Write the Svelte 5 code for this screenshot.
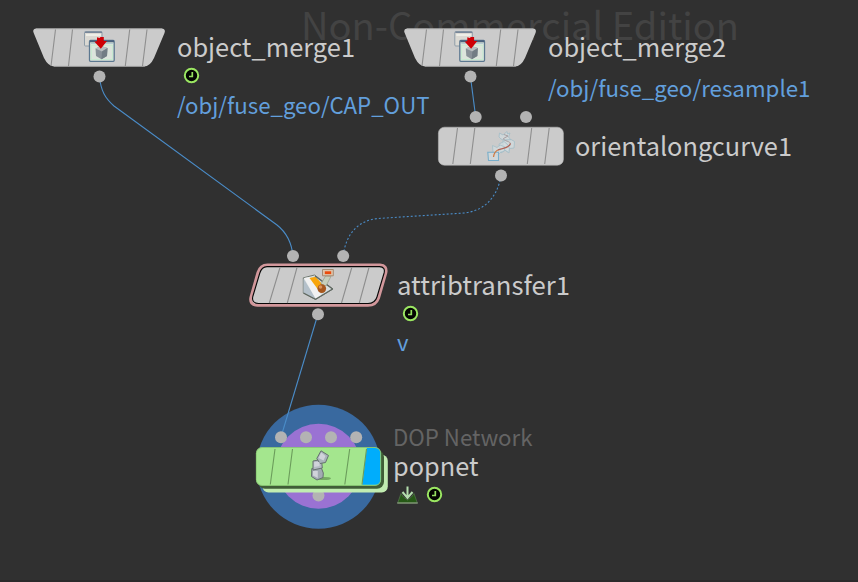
<script>
  const labels = [
    { t: 'object_merge1', x: 177, y: 56.8, w: 178, s: 25.6, c: 'name' },
    { t: 'object_merge2', x: 548, y: 56.8, w: 178, s: 25.6, c: 'name' },
    { t: 'orientalongcurve1', x: 575, y: 155.8, w: 217, s: 25.6, c: 'name' },
    { t: 'attribtransfer1', x: 397, y: 294.9, w: 173, s: 25.6, c: 'name' },
    { t: 'popnet', x: 393, y: 475.7, w: 85.5, s: 25.6, c: 'name' },
    { t: '/obj/fuse_geo/CAP_OUT', x: 177, y: 113.8, w: 252.5, s: 22.5, c: 'path' },
    { t: '/obj/fuse_geo/resample1', x: 548, y: 97, w: 262.5, s: 22.5, c: 'path' },
    { t: 'v', x: 397, y: 351, w: 11.5, s: 22.5, c: 'path' },
    { t: 'DOP Network', x: 393, y: 446, w: 139.5, s: 22.5, c: 'kind' }
  ];
  const dots = [[99.5,76.5],[470.5,76.5],[475.7,117],[526,117],[501,175.5],[293,256],[343.2,256],[318,314.3],[281,437.3],[306,437.3],[331,437.3],[356.2,437.3],[318.5,495.6]];
  const clocks = [[191.5,75.5],[410.5,313.5],[434.5,494.5]];
  const merges = [{ x: 0, icon: 0 }, { x: 371, icon: -0.7 }];
</script>

<svg class="network" width="858" height="582" viewBox="0 0 858 582">
  <rect width="858" height="582" fill="#303030" />
  <rect y="580" width="858" height="2" fill="#2b2a2b" />
  <text class="watermark" x="301" y="39.5" font-size="37.5" textLength="438" lengthAdjust="spacingAndGlyphs">Non-Commercial Edition</text>

  <circle cx="318.5" cy="466.7" r="62" fill="#39699f" />
  <circle cx="318.5" cy="466.3" r="42.5" fill="#9a72d3" />

  <g class="wire">
    <path d="M99.5 77C101 91 105 98 114 106L277 225Q291 236 293 256" />
    <path d="M470.5 77L475.7 117" />
    <path d="M501 176C497 198 484 211 464 213L378 218.5C360 220 346 232 343.2 256" stroke-dasharray="2 2" />
    <path d="M318 314L281 437" />
  </g>

  {#each dots as [x, y]}
    <circle cx={x} cy={y} r="6" fill="#b3b3b3" />
  {/each}

  {#each merges as m}
    <g transform="translate({m.x} 0)">
      <path d="M36 28.5H162Q166 29 164.5 33L154 58Q150 66.5 144 66.5H54Q48 66 44 58L33.7 33Q32 29 36 28.5Z" fill="#cbcbcb" />
      <path d="M36 28.8H162M54 66.3H145" stroke="#aaa" stroke-width=".7" />
      <path class="rib" d="M55.5 29.5L51 66M72.5 29.5L68.5 66M129.7 29.5L125.3 66M147 29.5L142.5 66" />
      <g transform="translate({m.icon} 0)">
        <rect x="84.5" y="31.5" width="17.5" height="14.5" rx="1" fill="#dbd9d3" stroke="#8f9da8" />
        <path d="M85 32.3H102" stroke="#6d7d92" stroke-width="1.2" />
        <path d="M86 35H101" stroke="#f4f4ee" stroke-width="1.5" />
        <rect x="89.5" y="40.5" width="24.7" height="20.8" rx="1" fill="#dce4dc" stroke="#5c7890" stroke-width="1.3" />
        <path d="M90 41.3H114" stroke="#4a617d" stroke-width="2" />
        <path d="M91 43.5H113" stroke="#b5cdd2" stroke-width="1" />
        <rect x="91.3" y="45.3" width="21.2" height="14.2" fill="none" stroke="#c7ead0" />
        <path d="M95.5 48.5L101 46L107.5 48L107 56L101.5 59.3L96 56Z" fill="#899198" />
        <path d="M95.5 48.5L101 46L107.5 48L102 51.5Z" fill="#b8bec0" />
        <path d="M102 51.5L107.5 48L107 56L101.5 59.3Z" fill="#727d84" />
        <path d="M97 37.3L99.5 38L100.5 37H103.8V41H107L100.8 48.8L94.5 41.8L97 41Z" fill="#ce0006" />
      </g>
    </g>
  {/each}

  <rect x="438.4" y="127.2" width="125" height="38" rx="6" fill="#cbcbcb" stroke="#b5b5b5" stroke-width=".6" />
  <path class="rib" d="M457.5 128L452.8 164M474.8 128L470.3 164M531.7 128L527.3 164M549.2 128L544.7 164" />
  <g fill="#d3dde0" fill-opacity=".65" stroke="#a2bdc7" stroke-width=".8">
    <path d="M499.5 133L503 135L507 131.5L507.5 134L510 133L508.5 137L511 140L506 141L501 139L499 137Z" />
    <path d="M503 140L511 139.5L514.5 141.5L514 148L509.5 148.5L508 152L503 149Z" />
    <path d="M499 144L504 141.5L508 145L509.5 149L509 153L505 150L501 153Z" />
    <path d="M492.5 145.5L497 147.5L500 145L505 147L504 151.5L501 152L498 155L493 152Z" />
    <path d="M487.8 152.2H498.5V160.5H488.5Z" stroke="#78aeca" stroke-width="1.1" />
  </g>
  <path d="M510.5 144C511 141 503 141 503.5 138.5L508 136L504 134.5" fill="none" stroke="#a3979a" stroke-width=".9" />
  <path d="M493.5 157C494 152 496 150.5 499 149.5" fill="none" stroke="#cf783f" stroke-width="1.3" />
  <path d="M498 150C502 148 509 148.5 510.5 143.5" fill="none" stroke="#b06659" stroke-width="1.3" />

  <path d="M267.5 265H380Q387.3 265.5 385.8 273L378.5 298Q376 305.3 368 305.3H257.5Q249.2 305 251 297L258 272.5Q260.3 265 267.5 265Z" fill="#cbcbcb" stroke="#d2979b" stroke-width="3" />
  <path d="M267 266.6H379.5Q385.6 267 384.1 273L377 297Q375 303.5 368 303.5H258.5Q251.3 303 252.8 296.5L259.8 273Q261.8 266.6 267 266.6Z" fill="#cbcbcb" stroke="#080606" stroke-width="1.1" />
  <path class="rib" d="M280 267.5L269.3 303M297 267.5L287.3 303M351.8 267.5L341.5 303M369 267.5L359.3 303" />
  <g stroke-linejoin="round">
    <path d="M303.3 277.8L314.5 275L333 289L315.5 299.5L303.3 293Z" fill="#d7dedf" stroke="#727a72" />
    <path d="M303.5 278.5L316 298.8L303.5 292.8Z" fill="#b4c0ca" />
    <path d="M304 278L310 277L321.5 295.5L315.8 299Z" fill="#f1f1f2" />
    <path d="M309.5 278L315.5 276.8L324 286L319.5 291.5Z" fill="#f8a50b" />
    <path d="M315 276L332.5 289L315.5 299.3L303.5 293" fill="none" stroke="#616962" stroke-width="1.2" />
    <path d="M325.5 276L331 276.3L326 286L321 284Z" fill="#c7cfbc" stroke="#8b9480" stroke-width=".6" />
    <rect x="322.5" y="269.5" width="10.8" height="6.3" fill="#dec6ad" stroke="#a48b72" />
    <rect x="324.8" y="271.3" width="6.4" height="2.8" fill="#eb4b0c" />
    <circle cx="321.8" cy="288.6" r="4.3" fill="#a7571e" />
    <circle cx="320.5" cy="287" r="1.8" fill="#d9935d" />
  </g>

  <rect x="262.5" y="454.8" width="125.3" height="37.8" rx="6" fill="#c1ecb1" />
  <rect x="258" y="450" width="126" height="38.8" rx="7" fill="#405e37" />
  <rect x="256" y="447.2" width="125" height="38.5" rx="6" fill="#a4e68e" />
  <path d="M366.8 448H376Q380.4 448.5 380.4 453V480Q380.4 484.5 376 484.8H362.3Z" fill="#00adfc" />
  <rect x="256.3" y="447.5" width="124.4" height="38" rx="6" fill="none" stroke="#82c36d" stroke-width=".7" />
  <path class="rib green" d="M275 449L270.3 484.5M292.5 449L288 484.5M349.7 449L344.8 484.5M366.5 449L362 484.5" />
  <ellipse cx="324" cy="478.5" rx="7" ry="1.6" fill="#639251" opacity=".7" />
  <g stroke="#66716f" stroke-width="1" stroke-linejoin="round">
    <path d="M311.8 468.5L321 467L323.3 473L323 477.5L317 480L311.5 476.5Z" fill="#a2aab3" />
    <path d="M313 461L321.5 459.5L322.3 468L313 470Z" fill="#b4bac3" />
    <path d="M321 450.8L328.5 455.5L325.5 462.5L320 463.5L316.8 458.5Z" fill="#a9b3ba" />
  </g>
  <path d="M321.2 452.5L325.5 456L323.5 460.5L318.5 458ZM314.2 462H319.5V466L314.2 467ZM313 471H317.8V478L313 475.5Z" fill="#d0d3da" />

  {#each clocks as [x, y]}
    <g transform="translate({x} {y})">
      <circle r="6.7" fill="#030602" stroke="#9be762" stroke-width="2" />
      <path d="M.8 -3.6V1H-2.5" fill="none" stroke="#94df60" stroke-width="1.7" />
    </g>
  {/each}

  <g>
    <path d="M401 493.5L403.5 497L407.5 500L411.5 497L414 493.5L417.3 503H397.7Z" fill="#265916" stroke="#52704a" stroke-width=".8" />
    <path d="M397.2 503H417.8" stroke="#8ba081" stroke-width="1.2" />
    <path d="M407.5 486.5V497M402.5 492L407.5 498L412.5 492" fill="none" stroke="#b4ddad" stroke-width="2" />
  </g>

  {#each labels as l}
    <text class={l.c} x={l.x} y={l.y} font-size={l.s} textLength={l.w} lengthAdjust="spacingAndGlyphs">{l.t}</text>
  {/each}
</svg>

<style>
  .network { display: block; font-family: "Noto Sans CJK SC", "Noto Sans", sans-serif; }
  .watermark { fill: #434343; }
  .name { fill: #cbcbcb; }
  .path { fill: #629fdc; }
  .kind { fill: #646464; }
  .wire { fill: none; stroke: #4a8cc8; stroke-width: 1.1; }
  .rib { fill: none; stroke: #8e8e8e; stroke-width: 1.1; }
  .green { stroke: #6b9c5b; }
</style>
